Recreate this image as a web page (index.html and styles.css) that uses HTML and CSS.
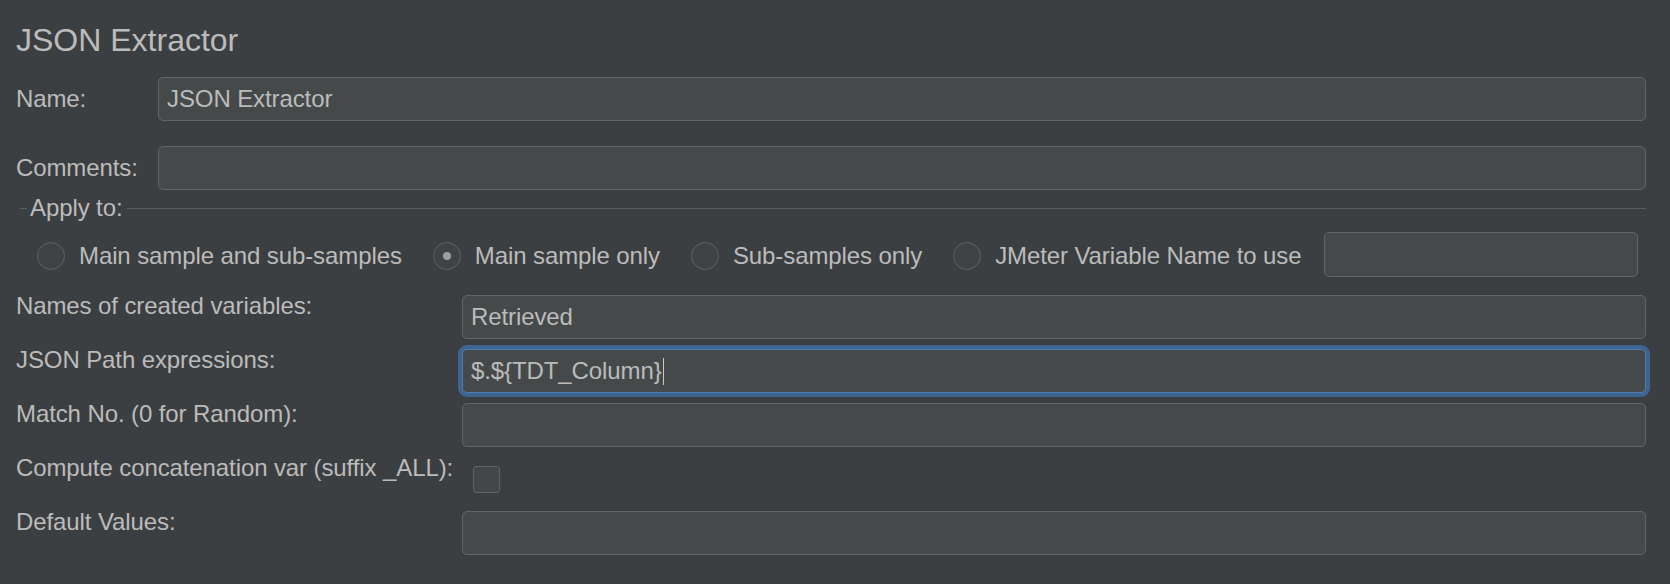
FILE: index.html
```html
<!DOCTYPE html>
<html lang="en">
<head>
<meta charset="utf-8">
<title>JSON Extractor</title>
<link rel="stylesheet" href="styles.css">
</head>
<body>
<main class="panel">
  <h1 class="title">JSON Extractor</h1>

  <div class="top-grid">
    <div class="lbl">Name:</div>
    <div class="field">JSON Extractor</div>
    <div class="lbl">Comments:</div>
    <div class="field"></div>
  </div>

  <section class="group" role="group" aria-label="Apply to">
    <div class="group-head"><span class="group-title">Apply to:</span></div>
    <div class="radios">
      <span class="radio-item"><span class="radio"></span>Main sample and sub-samples</span>
      <span class="radio-item"><span class="radio checked"></span>Main sample only</span>
      <span class="radio-item"><span class="radio"></span>Sub-samples only</span>
      <span class="radio-item"><span class="radio"></span>JMeter Variable Name to use</span>
      <div class="field var-field"></div>
    </div>
  </section>

  <div class="form-grid">
    <div class="lbl top">Names of created variables:</div>
    <div class="field">Retrieved</div>
    <div class="lbl top">JSON Path expressions:</div>
    <div class="field focused">$.${TDT_Column}<span class="caret"></span></div>
    <div class="lbl top">Match No. (0 for Random):</div>
    <div class="field"></div>
    <div class="lbl top">Compute concatenation var (suffix _ALL):</div>
    <div class="check-cell"><span class="checkbox"></span></div>
    <div class="lbl top">Default Values:</div>
    <div class="field"></div>
  </div>
</main>
</body>
</html>
```

FILE: styles.css
```css
* { box-sizing: border-box; }

html, body {
  margin: 0;
  padding: 0;
  background: #3c3f41;
}

body {
  width: 1670px;
  height: 584px;
  overflow: hidden;
  font-family: "Liberation Sans", Arial, sans-serif;
  font-size: 24px;
  letter-spacing: -0.1px;
  color: #bbbbbb;
}

.panel {
  padding: 0 24px 0 16px;
}

.title {
  margin: 0 0 18px;
  padding-top: 21px;
  font-size: 32px;
  font-weight: normal;
  line-height: 38px;
  letter-spacing: 0;
  color: #bbbbbb;
}

.top-grid {
  display: grid;
  grid-template-columns: 142px 1fr;
  grid-auto-rows: 44px;
  row-gap: 25px;
  align-items: center;
}

.lbl {
  line-height: 28px;
  white-space: nowrap;
}

.field {
  height: 44px;
  background: #45494a;
  border: 1px solid #646464;
  border-radius: 5px;
  padding: 0 8px;
  line-height: 42px;
  white-space: nowrap;
  color: #bbbbbb;
}

.field.focused {
  border-color: #4d7cb0;
  box-shadow: 0 0 0 4px #3e6590;
}

.caret {
  display: inline-block;
  width: 1px;
  height: 27px;
  background: #c8c8c8;
  vertical-align: -6px;
  margin-left: 1px;
}

.group {
  margin: 4px 0 0 4px;
}

.group-head {
  display: flex;
  align-items: center;
  height: 28px;
}

.group-head::before {
  content: "";
  width: 7px;
  height: 1px;
  background: #5a5d5f;
  margin-right: 3px;
}

.group-head::after {
  content: "";
  flex: 1;
  height: 1px;
  background: #5a5d5f;
  margin-left: 4px;
}

.group-title {
  line-height: 28px;
}

.radios {
  display: flex;
  align-items: center;
  height: 48px;
  margin-top: 10px;
  padding-left: 17px;
}

.radio-item {
  display: flex;
  align-items: center;
  gap: 14px;
  margin-right: 31px;
  white-space: nowrap;
}

.radio-item:nth-child(4) {
  margin-right: 23px;
}

.radio {
  width: 28px;
  height: 28px;
  border-radius: 50%;
  border: 1.5px solid #5e6163;
  background: #3f4344;
  display: flex;
  align-items: center;
  justify-content: center;
}

.radio.checked::after {
  content: "";
  width: 8px;
  height: 8px;
  border-radius: 50%;
  background: #9e9e9e;
}

.var-field {
  width: 314px;
  height: 45px;
  align-self: flex-start;
}

.form-grid {
  display: grid;
  grid-template-columns: 446px 1fr;
  grid-auto-rows: 44px;
  row-gap: 10px;
  margin-top: 15px;
}

.lbl.top {
  align-self: start;
  margin-top: -3px;
}

.check-cell {
  display: flex;
  align-items: center;
  padding-left: 11px;
}

.checkbox {
  width: 27px;
  height: 27px;
  border: 1.5px solid #606364;
  border-radius: 3px;
  background: #43474a;
}
```
